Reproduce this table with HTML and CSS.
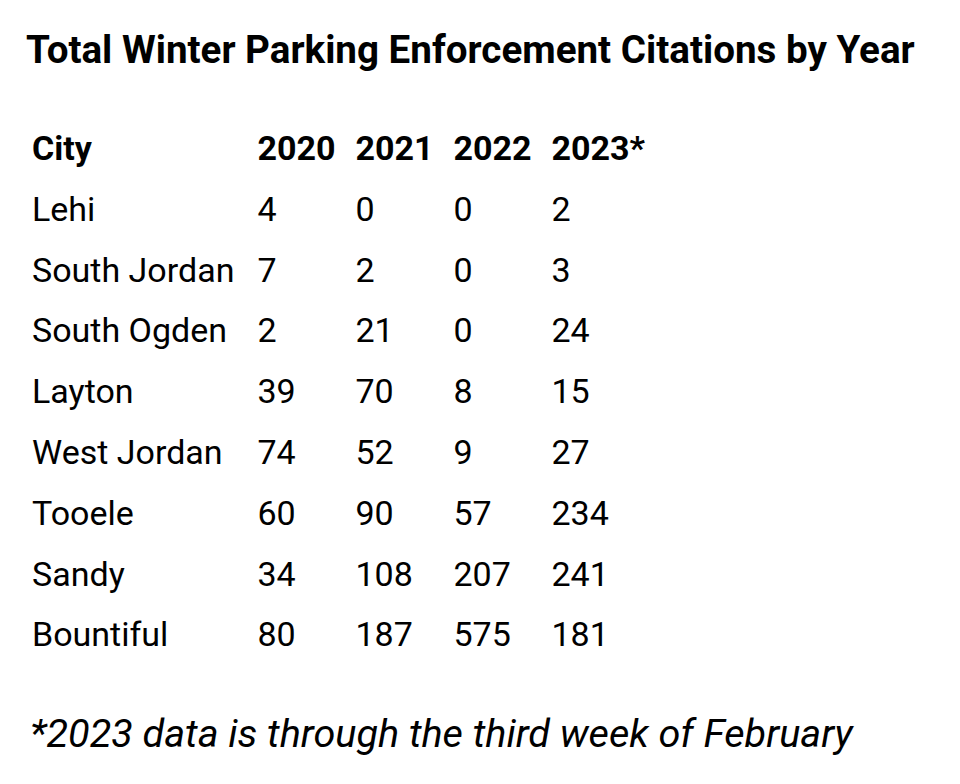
FILE: index.html
```html
<!DOCTYPE html>
<html lang="en">
<head>
<meta charset="utf-8">
<title>Total Winter Parking Enforcement Citations by Year</title>
<link rel="stylesheet" href="styles.css">
</head>
<body>
<main class="page">
  <h1 class="title">Total Winter Parking Enforcement Citations by Year</h1>
  <table class="data">
    <thead>
      <tr><th>City</th><th>2020</th><th>2021</th><th>2022</th><th>2023*</th></tr>
    </thead>
    <tbody>
      <tr><td>Lehi</td><td>4</td><td>0</td><td>0</td><td>2</td></tr>
      <tr><td>South Jordan</td><td>7</td><td>2</td><td>0</td><td>3</td></tr>
      <tr><td>South Ogden</td><td>2</td><td>21</td><td>0</td><td>24</td></tr>
      <tr><td>Layton</td><td>39</td><td>70</td><td>8</td><td>15</td></tr>
      <tr><td>West Jordan</td><td>74</td><td>52</td><td>9</td><td>27</td></tr>
      <tr><td>Tooele</td><td>60</td><td>90</td><td>57</td><td>234</td></tr>
      <tr><td>Sandy</td><td>34</td><td>108</td><td>207</td><td>241</td></tr>
      <tr><td>Bountiful</td><td>80</td><td>187</td><td>575</td><td>181</td></tr>
    </tbody>
  </table>
  <p class="note">*2023 data is through the third week of February</p>
</main>
</body>
</html>
```
FILE: styles.css
```css
html, body {
  margin: 0;
  padding: 0;
  background: #fff;
}
body {
  font-family: Roboto, "Liberation Sans", sans-serif;
  color: #000;
}
.page {
  padding: 27px 0 0 26px;
}
.title {
  margin: 0;
  font-size: 38.6px;
  font-weight: 700;
  line-height: 45px;
}
.data {
  margin: 45.7px 0 0 -4px;
  border-collapse: collapse;
  font-size: 34px;
  line-height: 40px;
}
.data th,
.data td {
  padding: 10.4px 10px;
  text-align: left;
  vertical-align: top;
  white-space: nowrap;
}
.data th:first-child,
.data td:first-child {
  padding-right: 13px;
}
.data th {
  font-weight: 700;
}
.note {
  margin: 46px 0 0 4px;
  font-size: 39.6px;
  font-style: italic;
  line-height: 46px;
}
```
